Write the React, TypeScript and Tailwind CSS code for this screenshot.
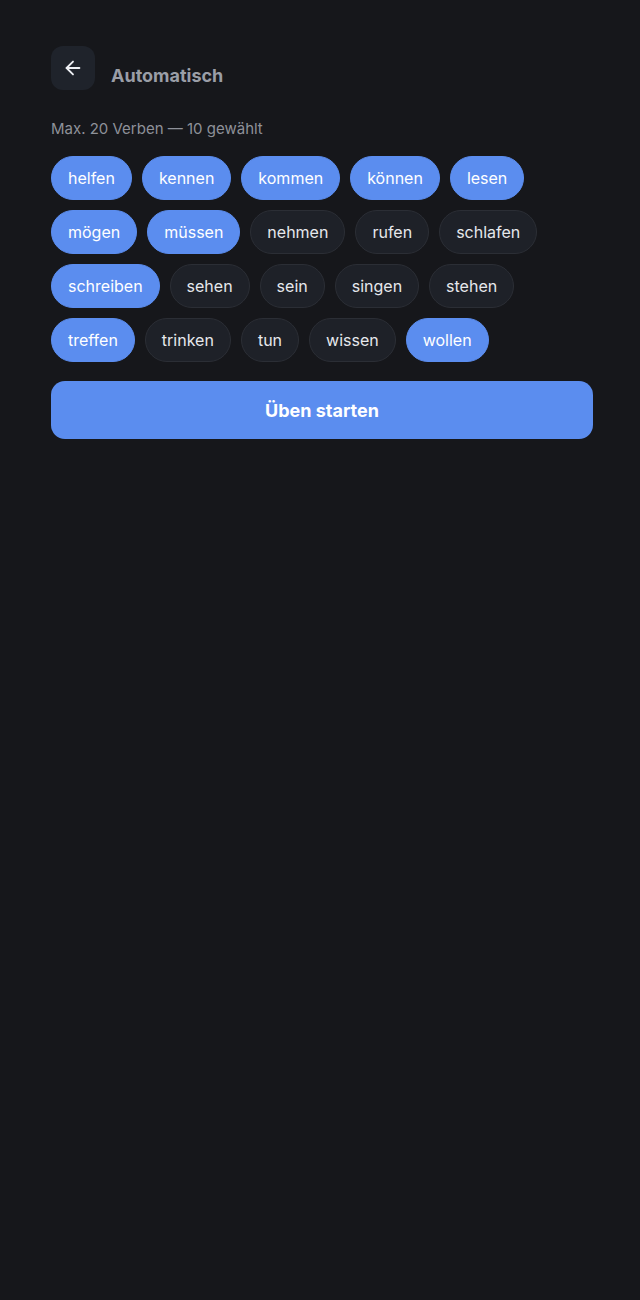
import React from "react";
import { ArrowLeft } from "lucide-react";

const verbs: [string, boolean][] = [
  ["helfen", true],
  ["kennen", true],
  ["kommen", true],
  ["können", true],
  ["lesen", true],
  ["mögen", true],
  ["müssen", true],
  ["nehmen", false],
  ["rufen", false],
  ["schlafen", false],
  ["schreiben", true],
  ["sehen", false],
  ["sein", false],
  ["singen", false],
  ["stehen", false],
  ["treffen", true],
  ["trinken", false],
  ["tun", false],
  ["wissen", false],
  ["wollen", true],
];

export default function App() {
  return (
    <div
      className="min-h-[1300px] w-full bg-[#16171b]"
      style={{ fontFamily: "Inter, 'Noto Sans', sans-serif" }}
    >
      <div className="ml-[51px] w-[542px] pt-[46px]">
        <div className="flex items-center gap-4">
          <button className="flex h-11 w-11 items-center justify-center rounded-xl bg-[#1f232b] text-[#eef0f4]">
            <ArrowLeft size={22} strokeWidth={2} />
          </button>
          <h1 className="mt-[14px] text-[18px] font-bold text-[#9a9ea7]">Automatisch</h1>
        </div>
        <p className="mt-[29px] text-[15px] leading-5 text-[#8e9199]">
          Max. 20 Verben — 10 gewählt
        </p>
        <div className="mt-[17px] flex flex-wrap gap-2.5">
          {verbs.map(([v, sel]) => (
            <span
              key={v}
              className={
                sel
                  ? "flex h-11 items-center rounded-full border border-[#5b8def] bg-[#5b8def] px-4 text-base text-white"
                  : "flex h-11 items-center rounded-full border border-[#2b2e35] bg-[#1e2128] px-4 text-base text-[#e6e8ec]"
              }
            >
              {v}
            </span>
          ))}
        </div>
        <button className="mt-[19px] flex h-[58px] w-full items-center justify-center rounded-[14px] bg-[#5b8def] text-[18px] font-bold text-white">
          Üben starten
        </button>
      </div>
    </div>
  );
}
